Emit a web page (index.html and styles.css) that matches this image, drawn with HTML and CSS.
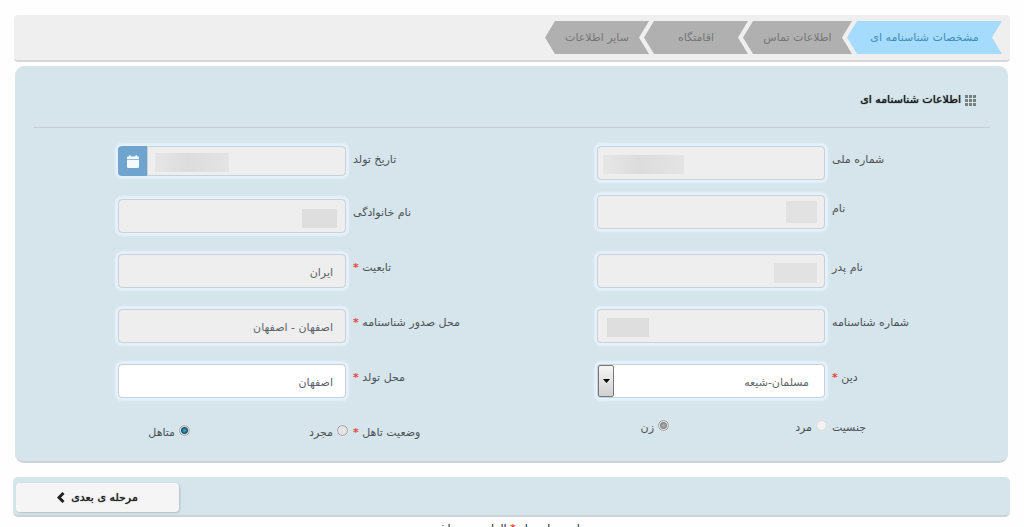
FILE: index.html
```html
<!DOCTYPE html>
<html lang="fa" dir="rtl">
<head>
<meta charset="utf-8">
<title>اطلاعات شناسنامه ای</title>
<link rel="stylesheet" href="styles.css">
</head>
<body>
<nav class="steps">
  <a class="step step-active" href="#identity">مشخصات شناسنامه ای</a>
  <a class="step" href="#contact">اطلاعات تماس</a>
  <a class="step" href="#residence">اقامتگاه</a>
  <a class="step" href="#other">سایر اطلاعات</a>
</nav>
<form>
  <section class="panel" id="identity">
    <h1 class="title">
      <svg class="title-icon" viewBox="0 0 11 11" aria-hidden="true"><path d="M0 0h3v3H0zM4 0h3v3H4zM8 0h3v3H8zM0 4h3v3H0zM4 4h3v3H4zM8 4h3v3H8zM0 8h3v3H0zM4 8h3v3H4zM8 8h3v3H8z"/></svg>
      اطلاعات شناسنامه ای
    </h1>
    <div class="columns">
      <div class="column column-main">
        <div class="row">
          <label for="nid">شماره ملی</label>
          <div class="field"><input id="nid" type="text" readonly><span class="mask mask-nid"></span></div>
        </div>
        <div class="row row-raised">
          <label for="fname">نام</label>
          <div class="field"><input id="fname" type="text" readonly><span class="mask mask-fname"></span></div>
        </div>
        <div class="row">
          <label for="father">نام پدر</label>
          <div class="field"><input id="father" type="text" readonly><span class="mask mask-father"></span></div>
        </div>
        <div class="row">
          <label for="cert">شماره شناسنامه</label>
          <div class="field"><input id="cert" type="text" readonly><span class="mask mask-cert"></span></div>
        </div>
        <div class="row">
          <label for="religion">دین <b class="req">*</b></label>
          <div class="field">
            <select id="religion"><option>مسلمان-شیعه</option></select>
            <span class="drop"><svg viewBox="0 0 7 4" aria-hidden="true"><path d="M0 0h7L3.500 4z"/></svg></span>
          </div>
        </div>
        <div class="row row-radio">
          <span class="caption" id="gender">جنسیت</span>
          <div class="options" role="radiogroup" aria-labelledby="gender">
            <label class="option"><input type="radio" name="gender" disabled>مرد</label>
            <label class="option"><input type="radio" name="gender" disabled checked>زن</label>
          </div>
        </div>
      </div>
      <div class="column column-side">
        <div class="row">
          <label for="birth">تاریخ تولد</label>
          <div class="field field-date">
            <input id="birth" type="text" readonly><span class="mask mask-birth"></span>
            <button class="calendar" type="button" aria-label="تقویم"><svg viewBox="0 0 12 13" aria-hidden="true"><path d="M0 2.500Q0 1.500 1 1.500h1V.8Q2 0 2.800 0t.8.8v.7h4.800V.8Q8.400 0 9.200 0t.8.8v.7h1q1 0 1 1V4H0z"/><path d="M0 4.700h12V12q0 1-1 1H1q-1 0-1-1z"/></svg></button>
          </div>
        </div>
        <div class="row row-after-date">
          <label for="lname">نام خانوادگی</label>
          <div class="field"><input id="lname" type="text" readonly><span class="mask mask-lname"></span></div>
        </div>
        <div class="row">
          <label for="nation">تابعیت <b class="req">*</b></label>
          <div class="field"><input id="nation" type="text" value="ایران" readonly></div>
        </div>
        <div class="row">
          <label for="issue">محل صدور شناسنامه <b class="req">*</b></label>
          <div class="field"><input id="issue" type="text" value="اصفهان - اصفهان" readonly></div>
        </div>
        <div class="row">
          <label for="place">محل تولد <b class="req">*</b></label>
          <div class="field"><input id="place" type="text" value="اصفهان"></div>
        </div>
        <div class="row row-radio-low">
          <span class="caption" id="marital">وضعیت تاهل <b class="req">*</b></span>
          <div class="options" role="radiogroup" aria-labelledby="marital">
            <label class="option"><input type="radio" name="marital">مجرد</label>
            <label class="option"><input type="radio" name="marital" checked>متاهل</label>
          </div>
        </div>
      </div>
    </div>
  </section>
  <div class="actions">
    <button class="next" type="submit">مرحله ی بعدی
      <svg viewBox="0 0 8 11" aria-hidden="true"><path d="M6.500 1L2 5.500 6.500 10"/></svg>
    </button>
  </div>
</form>
<p class="note">موارد ستاره دار <b class="req">*</b> الزامی می باشد</p>
</body>
</html>
```
FILE: styles.css
```css
* { box-sizing: border-box; }

html { overflow: hidden; }

body {
  margin: 0;
  padding: 15px 14px 0;
  background: #fefefe;
  color: #4a5257;
  font: 11px/18px "DejaVu Sans", Tahoma, sans-serif;
}

.steps {
  display: flex;
  padding: 6px 8px;
  background: #efefef;
  border-bottom: 2px solid #d6d6d6;
  border-radius: 4px;
}

.step {
  flex: 0 0 104px;
  line-height: 33px;
  text-align: center;
  text-decoration: none;
  color: #777;
  background: #b0b0b0;
  clip-path: polygon(100% 0, calc(100% - 10px) 50%, 100% 100%, 10px 100%, 0 50%, 10px 0);
}

.step + .step { margin-right: -5px; }
.step:nth-child(2) { flex-basis: 109px; }

.step-active {
  flex-basis: 155px;
  color: #3f8fb5;
  background: #a5dbfd;
}

.panel {
  margin: 4px 2px 0 1px;
  padding: 24px 18px 19px;
  background: #d6e4eb;
  border-bottom: 2px solid #cbd3d8;
  border-radius: 9px;
}

.title {
  display: flex;
  align-items: center;
  gap: 4px;
  margin: 0;
  padding: 0 14px 17px;
  border-bottom: 1px solid #c5d0d9;
  color: #15191c;
  font-size: 11px;
  font-weight: normal;
  line-height: 20px;
  text-shadow: 0 0 1px #15191c;
}

.title-icon {
  width: 11px;
  height: 11px;
  fill: #75827f;
}

.columns {
  display: grid;
  grid-template-columns: 393fr 479fr 85fr;
  padding-top: 18px;
}

.column {
  display: flex;
  flex-direction: column;
  gap: 21px;
}

.row {
  display: grid;
  gap: 7px;
}

.column-main .row { grid-template-columns: 158fr 228fr; }
.column-side .row { grid-template-columns: 244fr 228fr; }
.row-raised { margin: -6px 0 4px; }
.row-after-date { margin-top: 2px; }

.row > label,
.caption {
  padding-top: 5px;
  text-align: left;
}

.req {
  color: #e8463f;
  font-weight: bold;
}

.field {
  position: relative;
  display: flex;
  height: 34px;
  border-radius: 4px;
  box-shadow: 0 0 2px 3px #e5f2fb;
}

.field input,
.field select {
  width: 100%;
  min-width: 0;
  padding: 3px 12px 0;
  border: 1px solid #c9d0d6;
  border-radius: 4px;
  background: #fff;
  color: #606468;
  font: inherit;
  appearance: none;
}

.field input:read-only { background: #eee; }
.field select { padding: 3px 15px 0 20px; }
.field-date { height: 30px; }

.calendar {
  display: grid;
  place-items: center;
  flex: 0 0 29px;
  padding: 0;
  border: 0;
  border-radius: 4px 0 0 4px;
  background: #6fa4cf;
}

.field .field-date input,
.field-date input { border-radius: 0 4px 4px 0; }
.calendar svg { width: 12px; height: 13px; fill: #f4fafd; }

.drop {
  position: absolute;
  inset: 1px auto 1px 1px;
  display: grid;
  place-items: center;
  width: 16px;
  border: 1px solid #777;
  border-radius: 2px;
  background: linear-gradient(#f5f5f5, #d0d0d0);
  pointer-events: none;
}

.drop svg { width: 7px; height: 4px; }

.mask {
  position: absolute;
  top: 9px;
  height: 19px;
  background: linear-gradient(90deg, #e6e6e6, #dcdcdc 45%, #e4e4e4);
}

.mask-nid { left: 6px; width: 81px; }
.mask-fname { top: 6px; right: 8px; width: 31px; height: 22px; background: #e2e2e3; }
.mask-father { right: 8px; width: 43px; height: 20px; background: #e2e2e3; }
.mask-cert { left: 10px; width: 42px; background: #dedede; }
.mask-birth { top: 7px; left: 37px; width: 74px; }
.mask-lname { top: 10px; right: 9px; width: 35px; background: #dedede; }

.row-radio { margin-top: -5px; }

.options {
  display: grid;
  grid-template-columns: 158fr 70fr;
}

.option {
  display: flex;
  align-items: flex-start;
  gap: 4px;
  padding-top: 5px;
}

.option input {
  width: 11px;
  height: 11px;
  margin: 1px -2px 0 0;
  border: 1px solid #9a9da0;
  border-radius: 50%;
  outline: 1px solid #e3e9ec;
  background: #e3e5e6;
  appearance: none;
}

.option input:checked { background: radial-gradient(circle, #3998b5 0 1px, #174c66 3px, #dce6ea 4px); }
.option input:disabled { border-color: #d6d9db; background: #f2f2f2; }
.option input:disabled:checked {
  border-color: #909396;
  background: radial-gradient(circle, #aaa 0 1px, #858585 3px, #e6e8e9 4px);
}

.actions {
  margin: 14px 0 0 -1px;
  padding: 6px 3px 3px;
  background: #d6e4eb;
  border-bottom: 2px solid #cbd3d8;
  border-radius: 5px;
}

.next {
  display: flex;
  align-items: center;
  justify-content: center;
  gap: 6px;
  width: 163px;
  height: 29px;
  margin-right: auto;
  border: 0;
  border-radius: 4px;
  background: #f5f5f5;
  box-shadow: 1px 1px 2px #b5c0c7;
  color: #222;
  font: inherit;
  text-shadow: 0 0 1px #222;
}

.next svg {
  width: 8px;
  height: 11px;
  fill: none;
  stroke: #222;
  stroke-width: 3;
}

.note {
  margin: 3px 0 0;
  color: #222;
  text-align: center;
}
```
